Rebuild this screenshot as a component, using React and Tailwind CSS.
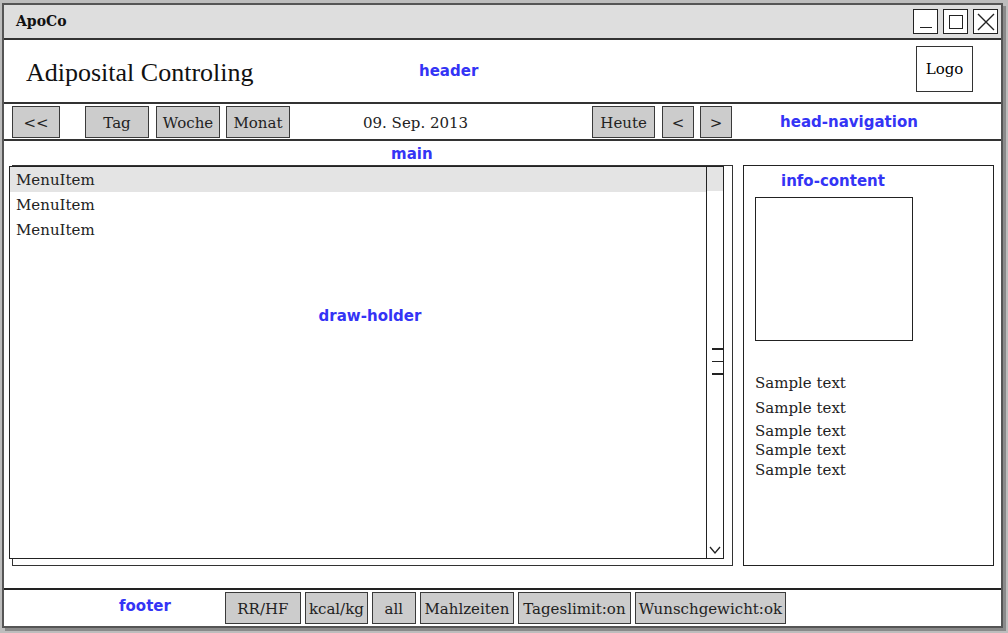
const SERIF = { fontFamily: '"DejaVu Serif", serif' }

const btn = 'h-[32px] bg-[#cccccc] border-[1.5px] border-[#3a3a3a] text-[15px] text-[#222] flex items-center justify-center pt-[3px]'

function Label({ children, className = '' }) {
  return (
    <span className={'text-[15px] font-semibold text-[#3434f5] ' + className} style={{ fontFamily: '"DejaVu Sans", sans-serif' }}>
      {children}
    </span>
  )
}

function WinBtn({ children }) {
  return (
    <div className="w-[25px] h-[25px] bg-white border-[1.5px] border-[#222] flex items-center justify-center">{children}</div>
  )
}

export default function App() {
  const footerBtns = [
    { t: 'RR/HF', w: 'w-[76px]' },
    { t: 'kcal/kg', w: 'w-[63px]' },
    { t: 'all', w: 'w-[44px]' },
    { t: 'Mahlzeiten', w: 'w-[94px]' },
    { t: 'Tageslimit:on', w: 'w-[113px]' },
    { t: 'Wunschgewicht:ok', w: 'w-[151px]' },
  ]
  const samples = [382, 407, 430, 449, 469]

  return (
    <div className="w-[1008px] h-[633px] bg-[#bdbdbd] pt-[3px] pl-[2px]" style={SERIF}>
      <div className="w-[1001px] h-[625px] border-2 border-[#555] bg-white flex flex-col shadow-[3px_3px_0_#8a8a8a]">
        {/* title bar */}
        <div className="h-[35px] bg-[#dedede] border-b-2 border-[#333] flex items-center pl-[12px] pr-[3px] shrink-0">
          <span className="text-[14px] font-bold text-[#111]">ApoCo</span>
          <div className="flex-1" />
          <div className="flex gap-[5px]">
            <WinBtn>
              <div className="w-[12px] h-[1.5px] bg-[#222] mt-[12px]" />
            </WinBtn>
            <WinBtn>
              <div className="w-[14px] h-[14px] border-[1.5px] border-[#222]" />
            </WinBtn>
            <WinBtn>
              <svg width="18" height="18" viewBox="0 0 18 18" stroke="#222" strokeWidth="1.4"><path d="M1 1L17 17M17 1L1 17" /></svg>
            </WinBtn>
          </div>
        </div>

        {/* header */}
        <div className="h-[64px] border-b-2 border-[#333] flex items-center shrink-0 relative">
          <span className="ml-[22px] text-[26px] text-[#111] mt-[2px]" style={{ fontFamily: '"Liberation Serif", serif' }}>Adiposital Controling</span>
          <Label className="absolute left-[415px] top-[20px]">header</Label>
          <div className="ml-auto mr-[28px] w-[57px] h-[46px] border-[1.5px] border-[#333] flex items-center justify-center text-[15px] mt-[-4px]">Logo</div>
        </div>

        {/* head-navigation */}
        <div className="h-[37px] border-b-2 border-[#333] flex items-center shrink-0 pl-[8px]">
          <div className={btn + ' w-[48px]'}>&lt;&lt;</div>
          <div className={btn + ' w-[64px] ml-[25px]'}>Tag</div>
          <div className={btn + ' w-[64px] ml-[7px]'}>Woche</div>
          <div className={btn + ' w-[64px] ml-[6px]'}>Monat</div>
          <span className="ml-[73px] text-[15px] text-[#222] pt-[3px]">09. Sep. 2013</span>
          <div className={btn + ' w-[63px] ml-[124px]'}>Heute</div>
          <div className={btn + ' w-[32px] ml-[7px]'}>&lt;</div>
          <div className={btn + ' w-[32px] ml-[6px]'}>&gt;</div>
          <Label className="ml-[48px] pt-[2px]">head-navigation</Label>
        </div>

        {/* main */}
        <div className="flex-1 relative flex pt-[24px]">
          <Label className="absolute left-[387px] top-[2px]">main</Label>

          {/* draw-holder */}
          <div className="ml-[8px] w-[721px] h-[401px] border-[1.5px] border-[#333] relative">
            <div className="absolute left-[-4px] top-[0px] w-[715px] h-[393px] border-[1.5px] border-[#222] bg-white flex">
              <div className="flex-1 flex flex-col text-[15px] text-[#222]">
                <div className="h-[25px] bg-[#e4e4e4] flex items-center pl-[6px] pt-[2px]">MenuItem</div>
                <div className="h-[25px] flex items-center pl-[6px] pt-[2px]">MenuItem</div>
                <div className="h-[25px] flex items-center pl-[6px] pt-[2px]">MenuItem</div>
                <div className="flex-1 flex items-start justify-center pt-[63px] pl-[24px]">
                  <Label>draw-holder</Label>
                </div>
              </div>
              <div className="w-[17px] border-l-[1.5px] border-[#222] flex flex-col items-end pt-[181px] relative">
                <div className="absolute left-0 right-0 top-0 h-[24px] bg-[#e4e4e4]" />
                <div className="w-[11px] h-[1.5px] bg-[#222]" />
                <div className="w-[11px] h-[1.5px] bg-[#222] mt-[11px]" />
                <div className="w-[11px] h-[1.5px] bg-[#222] mt-[11px]" />
                <div className="flex-1" />
                <svg width="14" height="10" viewBox="0 0 14 10" className="mb-[3px] mr-[1px]" fill="none" stroke="#222" strokeWidth="1.3"><path d="M2 2L7 8L12 2" /></svg>
              </div>
            </div>
          </div>

          {/* info-content */}
          <div className="ml-[10px] w-[251px] h-[401px] border-[1.5px] border-[#222] flex flex-col">
            <Label className="ml-[37px] mt-[5px] leading-[20px]">info-content</Label>
            <div className="ml-[11px] mt-[6px] w-[158px] h-[144px] border-[1.5px] border-[#222]" />
            <div className="relative flex-1 text-[15px] text-[#222]">
              {samples.map((y, i) => (
                <div key={i} className="absolute left-[11px]" style={{ top: y - 351 }}>Sample text</div>
              ))}
            </div>
          </div>
        </div>

        {/* footer */}
        <div className="h-[38px] border-t-2 border-[#222] flex items-center shrink-0">
          <Label className="ml-[115px] mr-[54px] mt-[-4px]">footer</Label>
          <div className="flex gap-[4px]">
            {footerBtns.map((b) => (
              <div key={b.t} className={btn + ' ' + b.w}>{b.t}</div>
            ))}
          </div>
        </div>
      </div>
    </div>
  )
}
